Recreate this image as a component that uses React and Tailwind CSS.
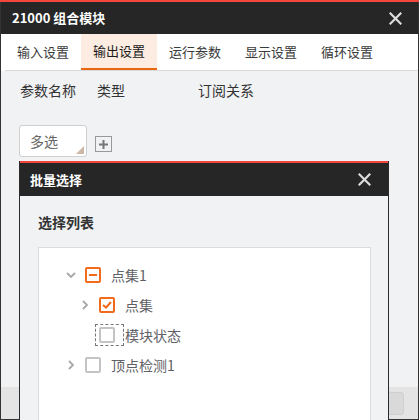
import React from 'react'

const font = { fontFamily: '"Noto Sans CJK SC", "Noto Sans", sans-serif' }

function CloseIcon({ size = 13, color = '#dcdcdc' }) {
  return (
    <svg width={size} height={size} viewBox="0 0 13 13">
      <path d="M1.5 1.5 L11.5 11.5 M11.5 1.5 L1.5 11.5" stroke={color} strokeWidth="2.2" strokeLinecap="square" />
    </svg>
  )
}

function Chevron({ dir }) {
  return (
    <span className="w-[16px] h-[16px] flex items-center justify-center">
      {dir === 'down' ? (
        <svg width="10" height="6" viewBox="0 0 10 6">
          <path d="M1 1 L5 5 L9 1" fill="none" stroke="#a8a8a8" strokeWidth="1.8" />
        </svg>
      ) : (
        <svg width="6" height="10" viewBox="0 0 6 10">
          <path d="M1 1 L5 5 L1 9" fill="none" stroke="#a8a8a8" strokeWidth="1.8" />
        </svg>
      )}
    </span>
  )
}

function Check({ state }) {
  if (state === 'half') {
    return (
      <span className="w-[16px] h-[16px] border-2 border-[#f26a1b] rounded-[2px] bg-white flex items-center justify-center">
        <span className="w-[8px] h-[2px] bg-[#f26a1b]" />
      </span>
    )
  }
  if (state === 'on') {
    return (
      <span className="w-[16px] h-[16px] border-2 border-[#f26a1b] rounded-[2px] bg-white flex items-center justify-center">
        <svg width="10" height="8" viewBox="0 0 10 8">
          <path d="M1 4 L4 6.5 L9 1" fill="none" stroke="#f26a1b" strokeWidth="2" />
        </svg>
      </span>
    )
  }
  return <span className="w-[16px] h-[16px] border-2 border-[#c4c4c4] rounded-[2px] bg-white" />
}

function TreeRow({ level, chevron, state, label, focus }) {
  return (
    <div className="h-[30px] flex items-center" style={{ paddingLeft: level * 14 }}>
      {chevron ? <Chevron dir={chevron} /> : <span className="w-[16px] shrink-0" />}
      {focus ? (
        <span className="ml-[2px] py-[2px] pl-[3px] pr-[8px] border border-dashed border-[#777] flex shrink-0">
          <Check state={state} />
        </span>
      ) : (
        <span className="ml-[6px] flex shrink-0">
          <Check state={state} />
        </span>
      )}
      <span className={(focus ? 'ml-[1px]' : 'ml-[10px]') + ' text-[14px] leading-[20px] text-[#5f6166]'}>{label}</span>
    </div>
  )
}

const tabs = ['输入设置', '输出设置', '运行参数', '显示设置', '循环设置']

export default function App() {
  return (
    <div className="w-[420px] h-[420px] relative bg-white overflow-hidden" style={font}>
      <div className="w-[419px] h-[420px] flex flex-col border-x border-b border-[#333]">
        <div className="h-[2px] shrink-0 bg-[#f2473a] -mx-px" />
        <div className="h-[32px] shrink-0 bg-[#262626] flex items-center justify-between pl-[11px] pr-[16px]">
          <span className="text-white font-bold text-[13px] leading-[20px]">21000 组合模块</span>
          <CloseIcon />
        </div>
        <div className="bg-white shrink-0">
          <div className="ml-[4px] flex border-b border-[#d9d9d9] h-[37px]">
            {tabs.map((t, i) => (
              <div
                key={t}
                className={
                  'w-[76px] flex items-center justify-center text-[13px] ' +
                  (i === 1 ? 'bg-[#fdece1] text-[#1a1a1a] border-b-2 border-[#e8670f]' : 'text-[#3a3a3a]')
                }
              >
                {t}
              </div>
            ))}
          </div>
        </div>
        <div className="flex-1 bg-[#f1f2f4] flex flex-col">
          <div className="h-[38px] flex items-center text-[14px] text-[#333] pl-[19px]">
            <span className="w-[77px]">参数名称</span>
            <span className="w-[101px]">类型</span>
            <span>订阅关系</span>
          </div>
          <div className="mt-[16px] ml-[18px] flex">
            <div className="relative w-[68px] h-[32px] bg-white border border-[#cfcfcf] rounded-[3px] flex items-center pl-[10px] text-[14px] text-[#666]">
              多选
              <svg className="absolute right-[2px] bottom-[2px]" width="8" height="8" viewBox="0 0 8 8">
                <polygon points="8,0 8,8 0,8" fill="#cdb8a7" />
              </svg>
            </div>
            <div className="ml-[8px] mt-[11px] w-[17px] h-[16px] border border-[#999] flex items-center justify-center">
              <svg width="11" height="11" viewBox="0 0 11 11">
                <path d="M5.5 1 V10 M1 5.5 H10" stroke="#777" strokeWidth="2" />
              </svg>
            </div>
          </div>
        </div>
        <div className="h-[32px] shrink-0 bg-[#e4e4e4] flex items-center justify-end pr-[14px]">
          <div className="w-[60px] h-[23px] bg-[#d9d9d9] border border-[#d0d0d0] rounded-[3px]" />
        </div>
      </div>

      <div className="absolute left-[19px] top-[161px] w-[370px] h-[270px] border-x border-[#2b2b2b] flex flex-col">
        <div className="h-[2px] shrink-0 bg-[#f2473a]" />
        <div className="h-[33px] shrink-0 bg-[#262626] flex items-center justify-between pl-[10px] pr-[17px]">
          <span className="text-white font-bold text-[13px] leading-[20px]">批量选择</span>
          <CloseIcon />
        </div>
        <div className="flex-1 bg-[#f1f2f4] pl-[18px] pr-[17px] pt-[16px]">
          <div className="text-[14px] leading-[20px] font-bold text-[#333]">选择列表</div>
          <div className="mt-[15px] h-[200px] bg-white border border-[#dcdcdc] pt-[12px] pl-[24px]">
            <TreeRow level={0} chevron="down" state="half" label="点集1" />
            <TreeRow level={1} chevron="right" state="on" label="点集" />
            <TreeRow level={1} state="off" label="模块状态" focus />
            <TreeRow level={0} chevron="right" state="off" label="顶点检测1" />
          </div>
        </div>
      </div>
    </div>
  )
}
